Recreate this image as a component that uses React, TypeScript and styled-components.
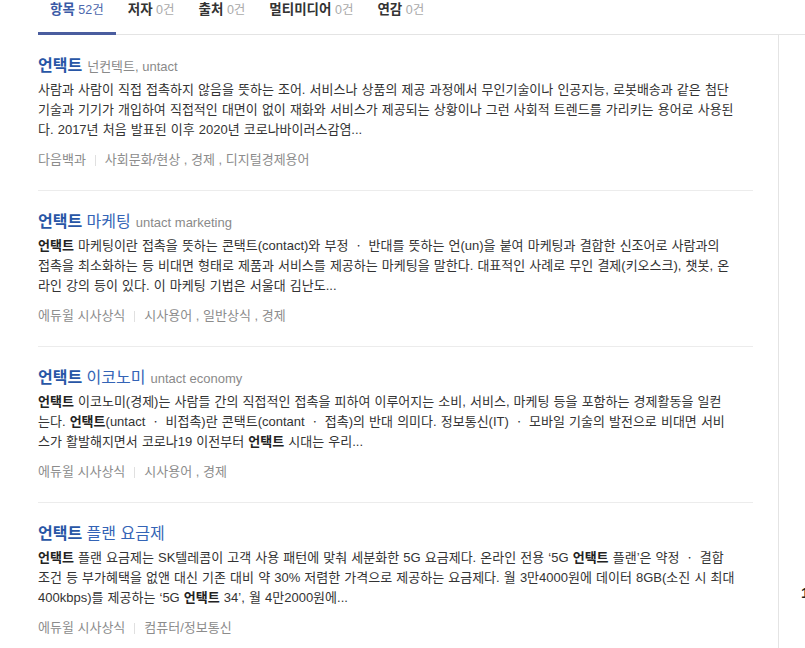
import React from "react";
import styled, { createGlobalStyle } from "styled-components";

const GlobalStyle = createGlobalStyle`
  html, body { margin: 0; padding: 0; background: #fff; overflow: hidden; }
  body { font-family: "Liberation Sans", "Noto Sans CJK KR", sans-serif; color: #333; }
`;

const Page = styled.div`
  width: 805px;
  height: 648px;
  overflow: hidden;
`;

const TabBar = styled.nav`
  display: flex;
  margin-left: 38px;
  height: 34px;
  border-bottom: 1px solid #e4e4e4;
`;

const Tab = styled.div<{ $active?: boolean }>`
  display: flex;
  align-items: baseline;
  gap: 3.5px;
  padding: 0 12px;
  height: 35px;
  box-sizing: border-box;
  line-height: 20px;
  border-bottom: 3px solid ${(p) => (p.$active ? "#4a5d9f" : "transparent")};
  cursor: pointer;
`;

const TabLabel = styled.span<{ $active?: boolean }>`
  font-size: 13.5px;
  font-weight: 700;
  color: ${(p) => (p.$active ? "#3a5aa6" : "#333")};
`;

const TabCount = styled.span<{ $active?: boolean }>`
  font-size: 12.5px;
  color: ${(p) => (p.$active ? "#4d68ad" : "#aaa")};
`;

const Body = styled.div`
  display: flex;
`;

const Results = styled.main`
  margin-left: 38px;
  width: 715px;
  flex-shrink: 0;
`;

const Sidebar = styled.aside`
  margin-left: 25px;
  flex: 1;
  min-width: 0;
  min-height: 613px;
  border-left: 1px solid #e4e4e4;
  padding: 548px 0 0 22px;
  box-sizing: border-box;
  white-space: nowrap;
  overflow: hidden;
`;

const Rank = styled.span`
  font-size: 15px;
  font-weight: 700;
  line-height: 20px;
  color: #222;
`;

const Item = styled.article`
  padding: 21px 0 20px;
  border-bottom: 1px solid #ececec;
`;

const TitleRow = styled.div`
  display: flex;
  align-items: baseline;
  gap: 5px;
  height: 20px;
  line-height: 20px;
`;

const Title = styled.a`
  font-size: 16px;
  color: #3464b6;
  text-decoration: none;
`;

const TitleStrong = styled.b`
  font-weight: 700;
  color: #2856a6;
`;

const Sub = styled.span`
  font-size: 13px;
  color: #8a8a8a;
`;

const Desc = styled.p`
  margin: 4px 0 0;
  font-size: 13px;
  line-height: 20px;
  color: #333;
  word-spacing: 0.5px;
`;

const Line = styled.span`
  display: block;
  white-space: nowrap;
`;

const Hl = styled.b`
  font-weight: 700;
  color: #222;
`;

const Meta = styled.div`
  margin-top: 10px;
  display: flex;
  align-items: center;
  font-size: 13px;
  line-height: 20px;
  color: #8c8c8c;
  white-space: pre;
`;

const Sep = styled.span`
  width: 1px;
  height: 11px;
  background: #e0e0e0;
  margin: 0 9px;
`;

const tabs = [
  { label: "항목", count: "52건", active: true },
  { label: "저자", count: "0건" },
  { label: "출처", count: "0건" },
  { label: "멀티미디어", count: "0건" },
  { label: "연감", count: "0건" },
];

type Part = string | { hl: string };
const H: Part = { hl: "언택트" };

const items: {
  strong: string;
  rest: string;
  sub?: string;
  lines: Part[][];
  source: string;
  cats: string;
}[] = [
  {
    strong: "언택트",
    rest: "",
    sub: "넌컨텍트, untact",
    lines: [
      ["사람과 사람이 직접 접촉하지 않음을 뜻하는 조어. 서비스나 상품의 제공 과정에서 무인기술이나 인공지능, 로봇배송과 같은 첨단"],
      ["기술과 기기가 개입하여 직접적인 대면이 없이 재화와 서비스가 제공되는 상황이나 그런 사회적 트렌드를 가리키는 용어로 사용된"],
      ["다. 2017년 처음 발표된 이후 2020년 코로나바이러스감염..."],
    ],
    source: "다음백과",
    cats: "사회문화/현상 , 경제 , 디지털경제용어",
  },
  {
    strong: "언택트",
    rest: " 마케팅",
    sub: "untact marketing",
    lines: [
      [H, " 마케팅이란 접촉을 뜻하는 콘택트(contact)와 부정 ㆍ 반대를 뜻하는 언(un)을 붙여 마케팅과 결합한 신조어로 사람과의"],
      ["접촉을 최소화하는 등 비대면 형태로 제품과 서비스를 제공하는 마케팅을 말한다. 대표적인 사례로 무인 결제(키오스크), 챗봇, 온"],
      ["라인 강의 등이 있다. 이 마케팅 기법은 서울대 김난도..."],
    ],
    source: "에듀윌 시사상식",
    cats: "시사용어 , 일반상식 , 경제",
  },
  {
    strong: "언택트",
    rest: " 이코노미",
    sub: "untact economy",
    lines: [
      [H, " 이코노미(경제)는 사람들 간의 직접적인 접촉을 피하여 이루어지는 소비, 서비스, 마케팅 등을 포함하는 경제활동을 일컫"],
      ["는다. ", H, "(untact ㆍ 비접촉)란 콘택트(contant ㆍ 접촉)의 반대 의미다. 정보통신(IT) ㆍ 모바일 기술의 발전으로 비대면 서비"],
      ["스가 활발해지면서 코로나19 이전부터 ", H, " 시대는 우리..."],
    ],
    source: "에듀윌 시사상식",
    cats: "시사용어 , 경제",
  },
  {
    strong: "언택트",
    rest: " 플랜 요금제",
    lines: [
      [H, " 플랜 요금제는 SK텔레콤이 고객 사용 패턴에 맞춰 세분화한 5G 요금제다. 온라인 전용 ‘5G ", H, " 플랜’은 약정 ㆍ 결합"],
      ["조건 등 부가혜택을 없앤 대신 기존 대비 약 30% 저렴한 가격으로 제공하는 요금제다. 월 3만4000원에 데이터 8GB(소진 시 최대"],
      ["400kbps)를 제공하는 ‘5G ", H, " 34’, 월 4만2000원에..."],
    ],
    source: "에듀윌 시사상식",
    cats: "컴퓨터/정보통신",
  },
];

export default function App() {
  return (
    <Page>
      <GlobalStyle />
      <TabBar>
        {tabs.map((t) => (
          <Tab key={t.label} $active={t.active}>
            <TabLabel $active={t.active}>{t.label}</TabLabel>
            <TabCount $active={t.active}>{t.count}</TabCount>
          </Tab>
        ))}
      </TabBar>
      <Body>
        <Results>
          {items.map((it, i) => (
            <Item key={i}>
              <TitleRow>
                <Title href="#">
                  <TitleStrong>{it.strong}</TitleStrong>
                  {it.rest}
                </Title>
                {it.sub && <Sub>{it.sub}</Sub>}
              </TitleRow>
              <Desc>
                {it.lines.map((line, l) => (
                  <Line key={l}>
                    {line.map((p, j) =>
                      typeof p === "string" ? (
                        <React.Fragment key={j}>{p}</React.Fragment>
                      ) : (
                        <Hl key={j}>{p.hl}</Hl>
                      )
                    )}
                  </Line>
                ))}
              </Desc>
              <Meta>
                <span>{it.source}</span>
                <Sep />
                <span>{it.cats}</span>
              </Meta>
            </Item>
          ))}
        </Results>
        <Sidebar>
          <Rank>1</Rank>
        </Sidebar>
      </Body>
    </Page>
  );
}
